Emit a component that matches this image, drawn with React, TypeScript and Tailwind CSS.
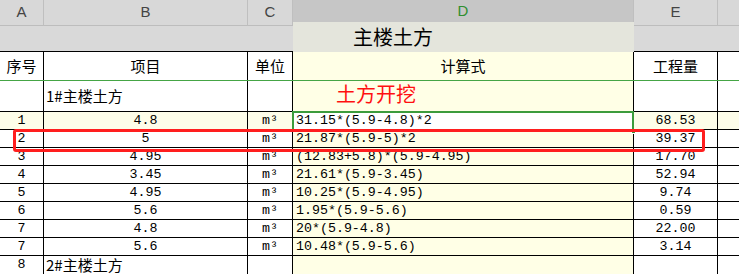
import React from 'react';

type Row = { no: string; item: string; unit: string; formula: string; qty: string };

const rows: Row[] = [
  { no: '1', item: '4.8', unit: 'm³', formula: '31.15*(5.9-4.8)*2', qty: '68.53' },
  { no: '2', item: '5', unit: 'm³', formula: '21.87*(5.9-5)*2', qty: '39.37' },
  { no: '3', item: '4.95', unit: 'm³', formula: '(12.83+5.8)*(5.9-4.95)', qty: '17.70' },
  { no: '4', item: '3.45', unit: 'm³', formula: '21.61*(5.9-3.45)', qty: '52.94' },
  { no: '5', item: '4.95', unit: 'm³', formula: '10.25*(5.9-4.95)', qty: '9.74' },
  { no: '6', item: '5.6', unit: 'm³', formula: '1.95*(5.9-5.6)', qty: '0.59' },
  { no: '7', item: '4.8', unit: 'm³', formula: '20*(5.9-4.8)', qty: '22.00' },
  { no: '7', item: '5.6', unit: 'm³', formula: '10.48*(5.9-5.6)', qty: '3.14' },
];

const cols = 'grid grid-cols-[44px_204px_45px_341px_84px_21px]';
const mono = "font-['Liberation_Mono','Noto_Sans_CJK_SC',monospace] text-[13.3px]";
const cjk = "font-['Noto_Sans_CJK_SC','Liberation_Sans',sans-serif]";

const ColHead: React.FC<{ label: string; active?: boolean; last?: boolean }> = ({ label, active, last }) => (
  <div
    className={`flex items-center justify-center font-['Liberation_Sans',sans-serif] text-[15px] ${
      active ? 'bg-[#c6c6c6] text-[#2f8f2f] border-b-[3px] border-b-[#3f9f3f]' : 'bg-[#d8d8d8] text-[#444] border-b border-b-[#bdbdbd]'
    } ${last ? '' : 'border-r border-r-[#bfbfbf]'}`}
  >
    {label}
  </div>
);

export default function App() {
  return (
    <div className="relative w-[739px] h-[274px] overflow-hidden bg-white text-black">
      {/* column letters */}
      <div className={`${cols} h-[22px]`}>
        <ColHead label="A" />
        <ColHead label="B" />
        <ColHead label="C" />
        <ColHead label="D" active />
        <ColHead label="E" />
        <ColHead label="" last />
      </div>

      {/* title row */}
      <div className={`${cols} h-[30px] border-b border-b-black bg-[#d9d9d9]`}>
        <div className="col-span-3" />
        <div className={`bg-[#e4e5dc] flex items-center pl-[60px] text-[20px] ${cjk}`}>主楼土方</div>
        <div className="col-span-2" />
      </div>

      {/* header row */}
      <div className={`${cols} h-[29px] border-b border-b-[#45a545] text-[15px] ${cjk}`}>
        <div className="flex items-center justify-center border-r border-r-black">序号</div>
        <div className="flex items-center justify-center border-r border-r-black">项目</div>
        <div className="flex items-center justify-center border-r border-r-black">单位</div>
        <div className="flex items-center justify-center border-r border-r-black bg-[#ffffe6]">计算式</div>
        <div className="flex items-center justify-center border-r border-r-black">工程量</div>
        <div />
      </div>

      {/* section row */}
      <div className={`${cols} h-[31px] border-b border-b-black`}>
        <div className="border-r border-r-black" />
        <div className={`flex items-end pb-[4px] pl-[2px] border-r border-r-black text-[15px] ${cjk}`}>1#主楼土方</div>
        <div className="border-r border-r-black" />
        <div className={`bg-[#ffffe6] border-r border-r-black pl-[43px] pt-[1px] text-[20px] leading-[24px] text-[#ff1010] ${cjk}`}>土方开挖</div>
        <div className="border-r border-r-black" />
        <div />
      </div>

      {/* data rows */}
      {rows.map((r, i) => {
        const hl = i === 0;
        const side = hl ? 'bg-[#fdfde9]' : 'bg-white';
        const dBg = hl ? 'bg-white' : 'bg-[#ffffe6]';
        return (
          <div key={i} className={`${cols} h-[18px] border-b border-b-black leading-[17px] ${mono}`}>
            <div className={`${side} text-center border-r border-r-black`}>{r.no}</div>
            <div className={`${side} text-center border-r border-r-black`}>{r.item}</div>
            <div className={`${side} text-center border-r border-r-black`}>{r.unit}</div>
            <div className={`${dBg} pl-[3px] border-r border-r-black whitespace-nowrap`}>{r.formula}</div>
            <div className={`${side} text-center border-r border-r-black`}>{r.qty}</div>
            <div className={side} />
          </div>
        );
      })}

      {/* last row */}
      <div className={`${cols} h-[18px] leading-[17px] ${mono}`}>
        <div className="text-center border-r border-r-black">8</div>
        <div className={`pl-[2px] border-r border-r-black text-[15px] ${cjk} leading-[18px]`}>2#主楼土方</div>
        <div className="border-r border-r-black" />
        <div className="bg-[#ffffe6] border-r border-r-black" />
        <div className="border-r border-r-black" />
        <div />
      </div>

      {/* active cell */}
      <div className="absolute left-[292px] top-[111px] w-[342px] h-[21px] border-[2px] border-[#3c9c3c] pointer-events-none">
        <div className="absolute right-[-4px] bottom-[-4px] w-[5px] h-[5px] bg-[#3c9c3c] border border-white" />
      </div>

      {/* red annotation box */}
      <div className="absolute left-[13px] top-[129px] w-[692px] h-[23px] border-[3px] border-[#ff1e1e] rounded-[3px] pointer-events-none" />
    </div>
  );
}
